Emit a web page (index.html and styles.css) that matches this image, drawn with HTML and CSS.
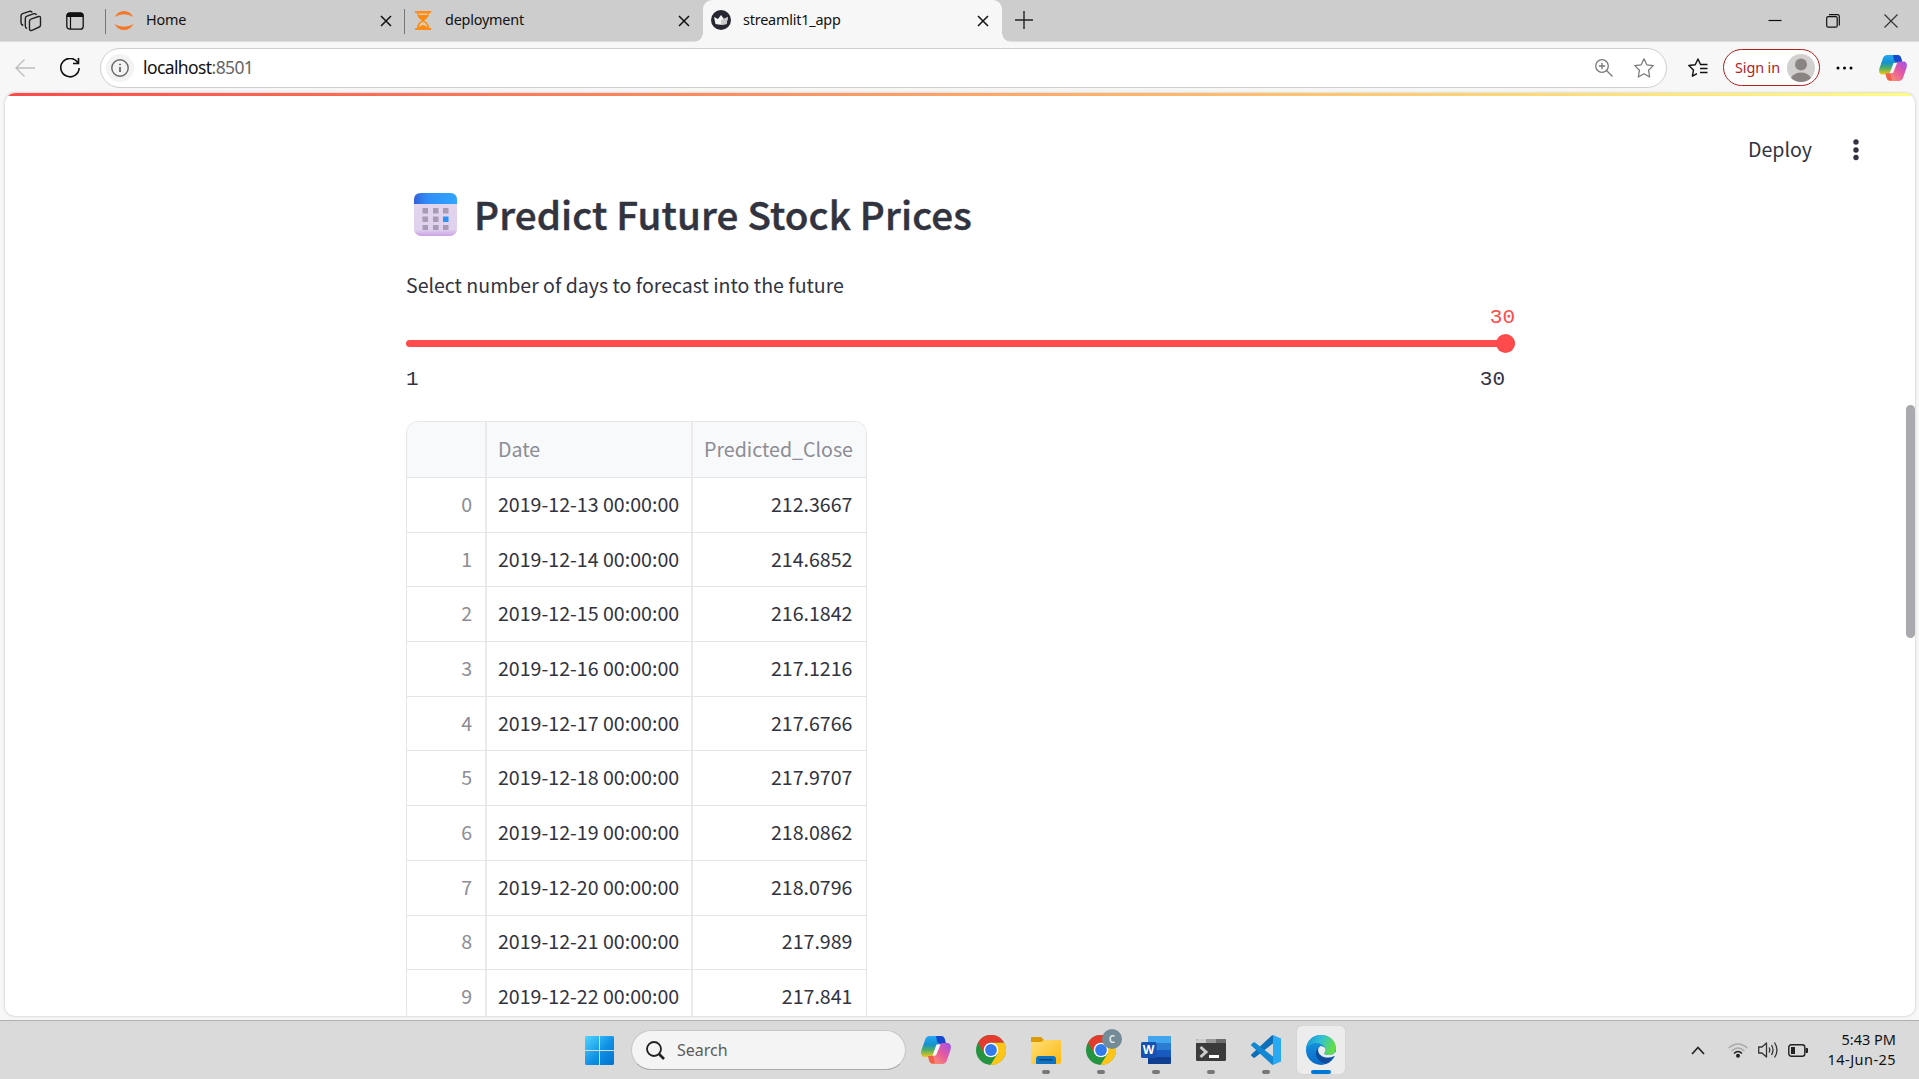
FILE: index.html
```html
<!DOCTYPE html>
<html lang="en">
<head>
<meta charset="utf-8">
<title>streamlit1_app</title>
<link rel="stylesheet" href="styles.css">
</head>
<body>
<svg width="0" height="0" class="defs" aria-hidden="true">
  <defs>
    <linearGradient id="cpA" x1="0" y1="0" x2="0" y2="1"><stop offset="0" stop-color="#25a8f5"/><stop offset=".4" stop-color="#1591cf"/><stop offset=".65" stop-color="#4aac6b"/><stop offset="1" stop-color="#f4c713"/></linearGradient>
    <linearGradient id="cpB" x1="1" y1="0" x2="0" y2="1"><stop offset="0" stop-color="#9b50ee"/><stop offset=".45" stop-color="#e75a9f"/><stop offset="1" stop-color="#ffa35f"/></linearGradient>
    <linearGradient id="edA" x1="0" y1="0" x2="1" y2=".3"><stop offset="0" stop-color="#168ed5"/><stop offset=".5" stop-color="#2fc0d5"/><stop offset="1" stop-color="#64dc4c"/></linearGradient>
    <linearGradient id="edB" x1="0" y1="0" x2="0" y2="1"><stop offset="0" stop-color="#1c9de0"/><stop offset="1" stop-color="#0869c9"/></linearGradient>
    <linearGradient id="win" x1="0" y1="0" x2="1" y2="1"><stop offset="0" stop-color="#50d5ff"/><stop offset=".55" stop-color="#1090e4"/><stop offset="1" stop-color="#0072cf"/></linearGradient>
    <linearGradient id="fold" x1="0" y1="0" x2="1" y2="1"><stop offset="0" stop-color="#ffe07a"/><stop offset="1" stop-color="#fbb90f"/></linearGradient>
    <linearGradient id="cal" x1="0" y1="0" x2="1" y2="0"><stop offset="0" stop-color="#3560d8"/><stop offset=".3" stop-color="#2f8df6"/><stop offset="1" stop-color="#31a5ff"/></linearGradient>
    <linearGradient id="calb" x1="0" y1="0" x2="0" y2="1"><stop offset="0" stop-color="#e2d6ee"/><stop offset=".85" stop-color="#e0d1ed"/><stop offset="1" stop-color="#c9a2e6"/></linearGradient>
    <symbol id="copilot" viewBox="0 0 30 28">
      <path d="M9 0H20Q23 0 24 4L25 8H19Q16 8 15 12L12 20Q11 21 8 21H3Q-1 20 .5 14L4 4Q5 0 9 0Z" fill="url(#cpA)"/>
      <path d="M15 0H20Q23 0 24 4L25 8H20Q17 8 16 5Z" fill="#1747cf"/>
      <path d="M21 28H12Q9 28 8 24L7 20H11Q14 20 15 16L18 9Q19 7 22 7H27Q31 8 29.5 14L26 24Q25 28 21 28Z" fill="url(#cpB)"/>
      <path d="M7 20H12L14 27Q9 29 8 24Z" fill="#f2604a"/>
      <path d="M15.500 8.500H19.500L15 19.500H11.500Z" fill="#f7f7f7"/>
    </symbol>
    <symbol id="chrome" viewBox="0 0 30 30">
      <circle cx="15" cy="15" r="15" fill="#259440"/>
      <path d="M15 7.500H28A15 15 0 0 1 14.500 30L21.500 18.700Z" fill="#fcc518"/>
      <path d="M2 7.500A15 15 0 0 1 28 7.500H15Q8 8 8.500 18.700Z" fill="#e33b2e"/>
      <circle cx="15" cy="15" r="7.300" fill="#fff"/><circle cx="15" cy="15" r="5.900" fill="#337bed"/>
    </symbol>
    <symbol id="x" viewBox="0 0 12 12"><path d="M1 1L11 11M11 1L1 11" fill="none" stroke="currentColor" stroke-width="1.500"/></symbol>
  </defs>
</svg>
<div class="screen">
  <header class="tabstrip">
    <svg class="workspaces" width="22" height="22" viewBox="0 0 22 22" fill="none" stroke="#222" stroke-width="1.400" stroke-linejoin="round"><path d="M11.500 8.800L18.500 6.500Q20.500 6 20.500 8V15Q20.500 16.500 19.300 17L12 20.300Q9.500 21.200 9.500 19V11Q9.500 9.500 11.500 8.800Z"/><path d="M7 18.500Q5.300 17.800 5.300 16V8.500Q5.300 6.800 7 6.200L14 3.700Q16 3.200 16.500 5"/><path d="M3.200 15.500Q1 14.500 1 12.500V6Q1 4.300 2.600 3.700L9.500 1.300Q11.500 .800 12.200 2.500"/></svg>
    <svg class="tabactions" width="18" height="18" viewBox="0 0 18 18"><rect x=".8" y=".8" width="16.400" height="16.400" rx="3" fill="none" stroke="#111" stroke-width="1.300"/><path d="M.8 5V3Q.8.800 3 .800H15Q17.200.800 17.200 3V5Z" fill="#111"/><path d="M4.500 5V17" stroke="#111" stroke-width="1.200"/></svg>
    <div class="tab tab-home"><svg width="20" height="22" viewBox="0 0 20 22"><path d="M.5 7Q4 1 10 1T19.500 7Q10 1.500.500 7ZM.5 14Q4 20 10 20T19.500 14Q10 19.500.500 14Z" fill="#f37726"/></svg><span>Home</span><svg class="close" width="12" height="12"><use href="#x"/></svg></div>
    <div class="tab tab-deploy"><svg width="16" height="19" viewBox="0 0 16 19"><path d="M0 0H16V2H0ZM0 17H16V19H0Z" fill="#ff8c1a"/><path d="M2 2H14Q14 7 9 9.500Q14 12 14 17H2Q2 12 7 9.500Q2 7 2 2Z" fill="#ff8a0c"/><path d="M3.500 2.500H12.500V4H3.500ZM8 10.800Q11.500 12 12.500 16.500Q10 14 8 14T3.500 16.500Q4.500 12 8 10.800Z" fill="#e0cbb0"/></svg><span>deployment</span><svg class="close" width="12" height="12"><use href="#x"/></svg></div>
    <div class="tab tab-active"><svg width="20" height="20" viewBox="0 0 20 20"><circle cx="10" cy="10" r="10" fill="#262730"/><path d="M3 7L7 9L10 5L13 9L17 7L15.500 14Q10 15.500 4.500 14Z" fill="#f5f5f5"/><path d="M10 10L17 7L15.500 14Q13 14.700 10 14.700Z" fill="#c9c9cc"/></svg><span>streamlit1_app</span><svg class="close" width="12" height="12"><use href="#x"/></svg></div>
    <svg class="plus" width="18" height="18" viewBox="0 0 18 18"><path d="M9 0V18M0 9H18" stroke="#222" stroke-width="1.400"/></svg>
    <div class="winctl">
      <svg width="14" height="14"><path d="M.5 6.500H13.500" stroke="#111" stroke-width="1.200"/></svg>
      <svg width="14" height="14" viewBox="0 0 14 14" fill="none" stroke="#111" stroke-width="1.200"><rect x=".7" y="2.700" width="10.500" height="10.500" rx="1.500"/><path d="M3 .7H11.500Q13.300.700 13.300 2.500V11.500"/></svg>
      <svg width="14" height="14" viewBox="0 0 14 14"><path d="M.5.500L13.500 13.500M13.500.500L.500 13.500" stroke="#333" stroke-width="1.200"/></svg>
    </div>
  </header>
  <nav class="toolbar">
    <svg class="back" width="20" height="18" viewBox="0 0 20 18" fill="none" stroke="#bdbdbd" stroke-width="1.300"><path d="M20 9H1M9.500.500L1 9L9.500 17.500"/></svg>
    <svg class="reload" width="20" height="20" viewBox="0 0 20 20" fill="none" stroke="#111" stroke-width="1.600"><path d="M18 5A9.200 9.200 0 1 0 19.200 10M18.500 0V5.500H13"/></svg>
    <div class="address">
      <span class="info"><svg width="18" height="18" viewBox="0 0 18 18"><circle cx="9" cy="9" r="8.200" fill="none" stroke="#666" stroke-width="1.400"/><path d="M9 8V13M9 4.700V6.300" stroke="#555" stroke-width="1.600"/></svg></span>
      <span class="url">localhost<span class="port">:8501</span></span>
      <svg class="mag" width="18" height="18" viewBox="0 0 18 18" fill="none" stroke="#777" stroke-width="1.300"><circle cx="7" cy="7" r="6.300"/><path d="M11.500 11.500L17.500 17.500M7 3.800V10.200M3.800 7H10.200"/></svg>
      <svg width="20" height="20" viewBox="0 0 20 20" fill="none" stroke="#777" stroke-width="1.200" stroke-linejoin="round"><path d="M10 .800L12.800 6.800L19.300 7.600L14.500 12.200L15.700 18.900L10 15.700L4.300 18.900L5.500 12.200L.700 7.600L7.200 6.800Z"/></svg>
    </div>
    <svg class="fav" width="20" height="19" viewBox="0 0 20 19" fill="none" stroke="#111" stroke-width="1.400" stroke-linejoin="round"><path d="M19.500 6.500H12.500L10 1L7.200 6.700L.8 7.500L5.500 11.900L4.400 18.200L9 15.600M12 10.500H19.500M12 14.500H19.500"/></svg>
    <div class="signin"><span>Sign in</span><svg width="28" height="28" viewBox="0 0 28 28"><circle cx="14" cy="14" r="14" fill="#d2d0ce"/><circle cx="14" cy="10.500" r="6" fill="#8a8583"/><path d="M4 24Q7 18.500 14 18.500T24 24Q20 28 14 28T4 24Z" fill="#8a8583"/></svg></div>
    <svg class="dots" width="17" height="4"><circle cx="2" cy="2" r="1.500"/><circle cx="8.500" cy="2" r="1.500"/><circle cx="15" cy="2" r="1.500"/></svg>
    <svg class="cop" width="28" height="26"><use href="#copilot"/></svg>
  </nav>
  <div class="viewport">
    <main class="page">
      <div class="rainbow"></div>
      <div class="appbar"><span>Deploy</span><svg width="6" height="22" fill="#31333f"><circle cx="3" cy="3" r="2.700"/><circle cx="3" cy="11" r="2.700"/><circle cx="3" cy="18.500" r="2.700"/></svg></div>
      <section class="content">
        <h2><svg width="43" height="43" viewBox="0 0 43 43"><rect width="43" height="43" rx="7" fill="url(#calb)"/><path d="M0 11V7Q0 0 7 0H36Q43 0 43 7V11Z" fill="url(#cal)"/><path d="M8.500 15H14V20.500H8.500ZM19 15H24.500V20.500H19ZM29 15H34.500V20.500H29ZM8.500 23.500H14V29H8.500ZM19 23.500H24.500V29H19ZM8.500 32H14V37H8.500ZM19 32H24.500V37H19ZM29 32H34.500V37H29Z" fill="#a89bb7"/><path d="M29 23.500H34.500V29H29Z" fill="#2b93f5"/></svg><span class="title">Predict Future Stock Prices</span></h2>
        <div class="label"><span>Select number of days to forecast into the future</span></div>
        <div class="value">30</div>
        <div class="track"><i></i></div>
        <div class="range"><span>1</span><span>30</span></div>
        <div class="grid">
          <div class="row head"><span></span><span>Date</span><span>Predicted_Close</span></div>
          <div class="row"><span>0</span><span>2019-12-13 00:00:00</span><span>212.3667</span></div>
          <div class="row"><span>1</span><span>2019-12-14 00:00:00</span><span>214.6852</span></div>
          <div class="row"><span>2</span><span>2019-12-15 00:00:00</span><span>216.1842</span></div>
          <div class="row"><span>3</span><span>2019-12-16 00:00:00</span><span>217.1216</span></div>
          <div class="row"><span>4</span><span>2019-12-17 00:00:00</span><span>217.6766</span></div>
          <div class="row"><span>5</span><span>2019-12-18 00:00:00</span><span>217.9707</span></div>
          <div class="row"><span>6</span><span>2019-12-19 00:00:00</span><span>218.0862</span></div>
          <div class="row"><span>7</span><span>2019-12-20 00:00:00</span><span>218.0796</span></div>
          <div class="row"><span>8</span><span>2019-12-21 00:00:00</span><span>217.989</span></div>
          <div class="row"><span>9</span><span>2019-12-22 00:00:00</span><span>217.841</span></div>
        </div>
      </section>
      <div class="scrollbar"></div>
    </main>
  </div>
  <footer class="taskbar">
    <svg class="start" width="29" height="29" viewBox="0 0 29 29"><path d="M1 0H14V14H0V1ZM15 0H28L29 1V14H15ZM0 15H14V29H1L0 28ZM15 15H29V28L28 29H15Z" fill="url(#win)"/></svg>
    <div class="search"><svg width="19" height="19" viewBox="0 0 19 19" fill="none" stroke="#222"><circle cx="8" cy="8" r="7" stroke-width="1.800"/><path d="M13 13L18 18" stroke-width="2.600"/></svg><span>Search</span></div>
    <div class="apps">
      <div class="app"><svg width="30" height="28"><use href="#copilot"/></svg></div>
      <div class="app"><svg width="30" height="30"><use href="#chrome"/></svg></div>
      <div class="app open"><svg width="30" height="28" viewBox="0 0 30 28"><path d="M0 2Q0 1 1 1H10L13 4V8H0Z" fill="#dd9a05"/><path d="M0 6H10L13 4H29Q30 4 30 5V26Q30 28 28 28H2Q0 28 0 26Z" fill="url(#fold)"/><path d="M5 28V23Q5 20 8 20H22Q25 20 25 23V28Z" fill="#0f74c4"/><path d="M9 23.800H21" stroke="#0a4577" stroke-width="1.500" stroke-linecap="round"/></svg></div>
      <div class="app open"><svg width="30" height="30"><use href="#chrome"/></svg><b class="badge">C</b></div>
      <div class="app open"><div class="word"><svg width="30" height="28" viewBox="0 0 30 28"><rect x="7" width="23" height="28" rx="1.500" fill="#2b7cd3"/><path d="M7 0H28.500Q30 0 30 1.500V7H7Z" fill="#41a5ee"/><path d="M7 14H30V21H7Z" fill="#185abd"/><path d="M7 21H30V26.500Q30 28 28.500 28H7Z" fill="#103f91"/><rect y="6" width="15.500" height="16" rx="1.500" fill="#1652b4"/></svg><b>W</b></div></div>
      <div class="app open"><svg width="30" height="22" viewBox="0 0 30 22"><rect width="30" height="22" rx="1.500" fill="#3b3b3b"/><path d="M0 4V1.500Q0 0 1.500 0H10V4Z" fill="#ccc"/><path d="M10 0H20V4H10Z" fill="#999"/><path d="M20 0H28.500Q30 0 30 1.500V4H20Z" fill="#6b6b6b"/><path d="M4.500 8L10 13L4.500 18" fill="none" stroke="#ccc" stroke-width="3"/><path d="M13 17.500H23" stroke="#fff" stroke-width="3"/></svg></div>
      <div class="app open"><svg width="30" height="30" viewBox="0 0 30 30"><path d="M22 0L30 3.500V26.500L22 30Z" fill="#29a9f2"/><path d="M22 0V8.500L4 22.500Q3 23.200 2 22.300L.5 21Q-.3 20 .5 19.300L20.500.800Z" fill="#0c6fb8"/><path d="M22 30V21.500L4 7.500Q3 6.800 2 7.700L.5 9Q-.3 10 .5 10.700L20.500 29.200Z" fill="#1388d2"/></svg></div>
      <div class="app open active"><svg width="30" height="30" viewBox="0 0 30 30"><circle cx="15" cy="15" r="15" fill="url(#edB)"/><path d="M0 14C1 5 7 0 15 0C24 0 30 6 30 13C30 18 26 20 22.500 20C19.500 20 18 19 18 18C18 17 19.500 16.500 19.500 14.500C19.500 11 15 8 10 8Q3 8.500 0 14Z" fill="url(#edA)"/><path d="M10 17C9 22 14 28 20 28.500Q25 27 28 21Q25 23 20 22.500C14 22 11 18 13 12Q10.500 14 10 17Z" fill="#104c9b"/><path d="M14.500 11Q19.500 11.500 19.500 14.500Q19.500 16.500 18 18Q18 20 22.500 20Q27 20 30 16.500L30 21H28Q25 23 20 22.500C14 21.500 11 17 12.500 13Z" fill="#ececec"/></svg></div>
    </div>
    <div class="tray">
      <svg class="caret" width="14" height="9"><path d="M1 8L7 1.500L13 8" fill="none" stroke="#222" stroke-width="1.700"/></svg>
      <svg class="wifi" width="20" height="15" viewBox="0 0 20 15" fill="none" stroke-width="1.500"><path d="M.7 5Q10-3 19.300 5M3.500 8Q10 2 16.500 8" stroke="#aaa"/><path d="M6 10.500Q10 6.500 14 10.500" stroke="#222"/><circle cx="10" cy="12.800" r="2" fill="#222"/></svg>
      <svg class="vol" width="20" height="18" viewBox="0 0 20 18" fill="none" stroke="#333" stroke-width="1.300" stroke-linejoin="round"><path d="M.7 6H4L8.500 2V16L4 12H.700ZM11 6.500Q12.500 9 11 11.500M13.500 4Q16.500 9 13.500 14M16.500 1.500Q21.500 9 16.500 16.500"/></svg>
      <svg width="20" height="13" viewBox="0 0 20 13"><rect x=".8" y=".8" width="16" height="11.400" rx="2.500" fill="none" stroke="#222" stroke-width="1.400"/><rect x="3" y="3" width="4" height="7" fill="#222"/><path d="M18 4.500H19.500V8.500H18Z" fill="#222" stroke="#222"/></svg>
      <div class="clock"><span class="time">5:43 PM</span><span class="date">14-Jun-25</span></div>
    </div>
  </footer>
</div>
</body>
</html>
```
FILE: styles.css
```css
* { box-sizing: border-box; }
body { margin: 0; font-family: "Noto Sans", "Open Sans", sans-serif; color: #111; }
svg { display: block; flex: none; }
.defs { position: absolute; }
.screen { width: 1919px; height: 1079px; display: flex; flex-direction: column; overflow: hidden; background: #f7f7f7; }
span { white-space: nowrap; }

.tabstrip { height: 42px; flex: none; display: flex; align-items: center; background: #cdcdcd; border-bottom: 1px solid #dedede; padding-left: 20px; }
.workspaces { margin-right: 24px; }
.tabactions { margin-right: 21px; }
.tab { display: flex; align-items: center; height: 42px; font-size: 14.400px; letter-spacing: -.2px; position: relative; }
.tab span { padding-bottom: 3px; }
.tab .close { margin-left: auto; }
.tab-home { width: 299px; padding: 0 12px 0 9px; }
.tab-home span { margin-left: 12px; }
.tab-home::before, .tab-deploy::before { content: ""; position: absolute; left: 0; top: 9px; width: 1px; height: 25px; background: #777; }
.tab-deploy { width: 299px; padding: 0 13px 0 11px; }
.tab-deploy span { margin-left: 14px; }
.tab-active { width: 299px; padding: 0 13px 0 8px; background: #f7f7f7; border-radius: 9px 9px 0 0; }
.tab-active svg:first-child { margin-top: -2px; }
.tab-active span { margin-left: 12px; }
.tab-active::before, .tab-active::after { content: ""; position: absolute; bottom: 0; width: 9px; height: 9px; }
.tab-active::before { left: -9px; background: radial-gradient(circle at 0 0, transparent 8.500px, #f7f7f7 9px); }
.tab-active::after { right: -9px; background: radial-gradient(circle at 100% 0, transparent 8.500px, #f7f7f7 9px); }
.plus { margin: 0 0 2px 13px; }
.winctl { margin-left: auto; display: flex; gap: 44px; padding-right: 21px; }

.toolbar { height: 51px; flex: none; display: flex; align-items: center; padding-left: 15px; }
.reload { margin: 0 20px 0 25px; }
.address { width: 1567px; height: 40px; border: 1px solid #cfcfcf; border-radius: 20px; background: #fff; display: flex; align-items: center; padding: 0 12px 0 5px; }
.info { width: 28px; height: 28px; border-radius: 50%; background: #f3f3f3; display: grid; place-items: center; }
.url { margin-left: 9px; padding-bottom: 2px; font-size: 17.500px; letter-spacing: -.6px; }
.port { color: #666; }
.mag { margin-left: auto; margin-right: 21px; }
.fav { margin-left: 21px; }
.signin { margin-left: 15px; width: 97px; height: 37px; border: 1px solid #b01e1e; border-radius: 19px; background: #fff; display: flex; align-items: center; justify-content: space-between; padding: 0 4px 0 11px; color: #b01e1e; font-size: 14.400px; letter-spacing: -.1px; }
.signin span { padding-bottom: 1px; }
.dots { margin-left: 16px; }
.cop { margin-left: 26px; }

.viewport { height: 928px; flex: none; padding: 0 4px 4px 5px; border-bottom: 1px solid #b0b0b0; }
.page { height: 923px; background: #fff; border-radius: 10px; overflow: hidden; position: relative; box-shadow: 0 0 2px 1px #ddd; font-family: "Noto Sans CJK SC", sans-serif; color: #31333f; display: flow-root; }
.rainbow { height: 3px; background: linear-gradient(90deg, #ff4b4b, #fffd80); }
.appbar { display: flex; align-items: center; justify-content: flex-end; gap: 41px; padding-right: 56px; height: 40px; margin-top: 34px; font-size: 19.600px; }
.appbar span { padding-bottom: 4px; }
.content { width: 1109px; margin-left: 401px; }
h2 { margin: 0; height: 70px; margin-top: 9px; display: flex; align-items: center; padding-left: 8px; font-weight: 500; font-size: 38.600px; letter-spacing: .15px; -webkit-text-stroke: .5px #31333f; }
h2 svg { margin-right: 17px; }
.title { padding-bottom: 2px; }
.label { height: 30px; margin-top: 20px; display: flex; align-items: center; font-size: 19.560px; }
.value, .range { font-family: "Liberation Mono", monospace; font-size: 21px; line-height: 24px; }
.value { margin-top: 7px; text-align: right; color: #ff4b4b; }
.track { height: 7px; margin-top: 10px; background: #ff4b4b; border-radius: 4px; position: relative; }
.track i { position: absolute; right: 0; top: -6px; width: 19px; height: 19px; border-radius: 50%; background: #ff4b4b; }
.range { margin-top: 21px; display: flex; justify-content: space-between; padding-right: 10px; }
.grid { margin-top: 29px; width: 461px; border: 1px solid #e6e6e8; border-radius: 12px; overflow: hidden; font-size: 19.600px; }
.row { height: 54.690px; display: grid; grid-template-columns: 78px 206px 1fr; border-top: 1px solid #e5e5e7; }
.row span { display: flex; align-items: center; padding: 0 13.500px 3px 11px; border-left: 2px solid #ebebed; }
.row span:first-child { border-left: 0; padding-right: 13px; justify-content: flex-end; color: #8c8d95; }
.row span:last-child { justify-content: flex-end; }
.row.head { border-top: 0; height: 55px; background: #f8f9fb; }
.row.head span { color: #8c8d95; padding-bottom: 2px; }
.scrollbar { position: absolute; right: 0; top: 312px; width: 9px; height: 233px; border-radius: 5px; background: #a9a9ae; }

.taskbar { flex: 1; background: #dadada; display: flex; align-items: center; padding-left: 585px; }
.search { margin-left: 17px; width: 275px; height: 40px; border: 1px solid #c6c6c6; border-bottom-color: #aaa; border-radius: 20px; background: #f4f4f4; display: flex; align-items: center; gap: 12px; padding-left: 14px; color: #5c5c5c; font-size: 16px; }
.apps { display: flex; margin-left: 6px; gap: 7px; }
.app { width: 48px; height: 48px; display: grid; place-items: center; border-radius: 5px; position: relative; }
.app.open::after { content: ""; position: absolute; left: 20px; bottom: 0; width: 8px; height: 4px; border-radius: 2px; background: #777; }
.app.active { background: #ececec; box-shadow: 0 0 1px #bbb; }
.app.open.active::after { left: 14px; width: 20px; background: #0078d4; }
.badge { position: absolute; left: 25px; top: 3px; width: 20px; height: 20px; border-radius: 50%; background: #738a97; color: #dfe6ea; font-size: 10px; line-height: 20px; text-align: center; }
.word { position: relative; }
.word b { position: absolute; left: 0; top: 6px; width: 15px; text-align: center; color: #fff; font-size: 12px; line-height: 16px; }
.tray { margin-left: auto; display: flex; align-items: center; padding-right: 23px; }
.caret { margin-right: 23px; }
.wifi, .vol { margin-right: 10px; }
.clock { width: 78px; display: flex; flex-direction: column; align-items: flex-end; font-size: 14.500px; line-height: 20px; margin-left: 10px; padding-bottom: 2px; }
.date { letter-spacing: .45px; }
```
